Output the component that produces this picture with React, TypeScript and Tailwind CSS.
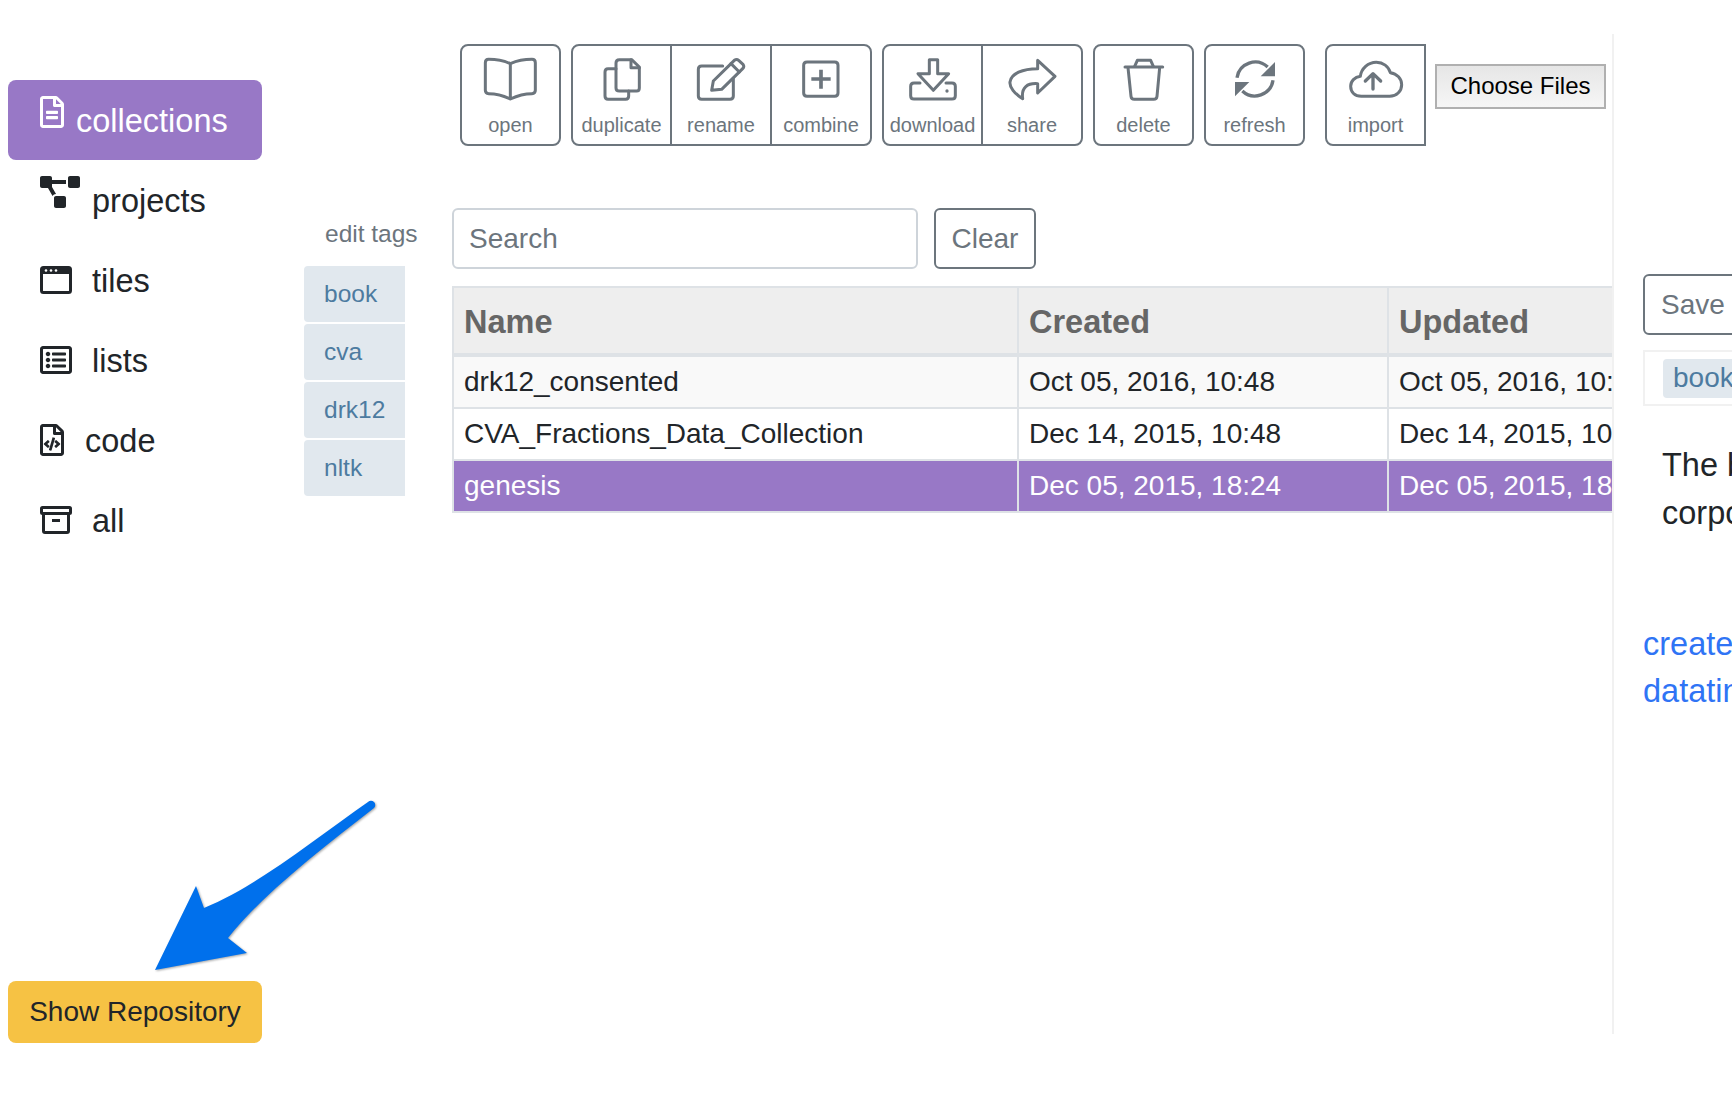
import React from 'react'
import { FaRegFileAlt, FaProjectDiagram, FaRegListAlt, FaRegFileCode } from 'react-icons/fa'

const TilesIcon = () => (
  <svg width="32" height="28" viewBox="0 0 32 28" fill="none">
    <rect x="1.5" y="1.5" width="29" height="25" rx="2" stroke="#212529" strokeWidth="3" />
    <rect x="1" y="1" width="30" height="7" fill="#212529" />
    <circle cx="6" cy="4.5" r="1.3" fill="#fff" />
    <circle cx="11" cy="4.5" r="1.3" fill="#fff" />
    <circle cx="16" cy="4.5" r="1.3" fill="#fff" />
  </svg>
)

const ArchiveIcon = () => (
  <svg width="32" height="28" viewBox="0 0 32 28" fill="none" stroke="#212529" strokeWidth="3">
    <rect x="1.5" y="1.5" width="29" height="6" rx="1" />
    <path d="M3.5 8V25Q3.5 26.5 5 26.5H27Q28.500 26.500 28.500 25V8" />
    <path d="M12 14.500H20" />
  </svg>
)

const navItems = [
  { label: 'projects', icon: <FaProjectDiagram className="w-[40px] h-[32px] text-[#212529]" />, textClass: 'ml-[12px] mt-[2px]', iconClass: 'mb-[16px]' },
  { label: 'tiles', icon: <TilesIcon />, textClass: 'ml-[20px] mt-[2px]', iconClass: '' },
  { label: 'lists', icon: <FaRegListAlt className="w-[32px] h-[32px] text-[#212529]" />, textClass: 'ml-[20px] mt-[2px]', iconClass: '' },
  { label: 'code', icon: <FaRegFileCode className="w-[24px] h-[32px] text-[#212529]" />, textClass: 'ml-[21px] mt-[2px]', iconClass: '' },
  { label: 'all', icon: <ArchiveIcon />, textClass: 'ml-[20px] mt-[2px]', iconClass: '' },
]

const ToolIcon = ({ x, w, children }: { x: number; w: number; children: React.ReactNode }) => (
  <svg
    width={w / 3}
    height={45}
    viewBox={`${x} 50 ${w} 135`}
    fill="none"
    stroke="#6c757d"
    strokeWidth="9"
    strokeLinejoin="round"
    strokeLinecap="round"
  >
    {children}
  </svg>
)

const ToolButton = ({ label, className, children }: { label: string; className: string; children: React.ReactNode }) => (
  <button className={`h-[102px] flex flex-col items-center pt-[11px] border-2 border-[#6c757d] bg-white text-[20px] leading-[24px] text-[#6c757d] ${className}`}>
    {children}
    <span className="mt-[11px]">{label}</span>
  </button>
)

const rows = [
  { name: 'drk12_consented', created: 'Oct 05, 2016, 10:48', updated: 'Oct 05, 2016, 10:48', cls: 'bg-[#f9f9f9] text-[#212529]' },
  { name: 'CVA_Fractions_Data_Collection', created: 'Dec 14, 2015, 10:48', updated: 'Dec 14, 2015, 10:48', cls: 'bg-white text-[#212529]' },
  { name: 'genesis', created: 'Dec 05, 2015, 18:24', updated: 'Dec 05, 2015, 18:24', cls: 'bg-[#9878c6] text-white' },
]

export default function App() {
  return (
    <div className="relative flex w-[1732px] h-[1104px] overflow-hidden bg-white font-['Liberation_Sans',Arial,sans-serif]">
      {/* sidebar */}
      <aside className="ml-[8px] w-[254px] shrink-0 pt-[80px] pb-[61px] flex flex-col justify-between">
        <nav className="flex flex-col">
          <a className="h-[80px] flex items-center pl-[32px] rounded-lg bg-[#9878c6] text-white text-[32.5px]">
            <FaRegFileAlt className="w-[24px] h-[32px] mb-[16px]" />
            <span className="ml-[12px] mt-[2px]">collections</span>
          </a>
          {navItems.map((item) => (
            <a key={item.label} className="h-[80px] flex items-center pl-[32px] text-[#212529] text-[32.5px]">
              <span className={`flex ${item.iconClass}`}>{item.icon}</span>
              <span className={item.textClass}>{item.label}</span>
            </a>
          ))}
        </nav>
        <button className="h-[62px] rounded-lg bg-[#f6c244] text-[#212529] text-[28px]">Show Repository</button>
      </aside>

      {/* tags */}
      <div className="ml-[42px] w-[148px] shrink-0 pt-[219px]">
        <div className="ml-[21px] h-[30px] leading-[30px] text-[24.5px] text-[#6c757d] whitespace-nowrap">edit tags</div>
        <div className="mt-[17px] w-[101px] flex flex-col gap-[2px]">
          {['book', 'cva', 'drk12', 'nltk'].map((tag) => (
            <div key={tag} className="h-[56px] pl-[20px] flex items-center rounded-l-sm bg-[#e1e8ee] text-[24.5px] text-[#4d7ba0]">
              {tag}
            </div>
          ))}
        </div>
      </div>

      {/* collections */}
      <main className="w-[1160px] shrink-0 pt-[44px]">
        <div className="ml-[8px] flex items-start">
          <ToolButton label="open" className="w-[101px] rounded-lg">
            <ToolIcon x={75} w={165}>
              <path d="M157 70C135 60 110 57 92 57Q82 57 82 67V150Q82 160 92 160C115 160 135 165 157 176C180 165 200 160 222 160Q232 160 232 150V67Q232 57 222 57C205 57 180 60 157 70ZM157 70V176" />
            </ToolIcon>
          </ToolButton>

          <div className="ml-[10px] flex">
            <ToolButton label="duplicate" className="w-[101px] rounded-l-lg">
              <ToolIcon x={426} w={120}>
                <path d="M478 58H515L538 80V143Q538 152 530 152H478Q468 152 468 143V68Q468 58 478 58Z" />
                <path d="M513 58V82H538" />
                <path d="M468 85H444Q435 85 435 95V167Q435 177 444 177H497Q506 177 506 167V152" />
              </ToolIcon>
            </ToolButton>
            <ToolButton label="rename" className="w-[102px] -ml-[2px]">
              <ToolIcon x={710} w={150}>
                <path d="M790 77H727Q717 77 717 87V167Q717 177 727 177H812Q822 177 822 167V115" />
                <path d="M757 150L762 122L825 60Q832 55 838 60L851 72Q856 79 850 85L787 147Z" />
                <path d="M815 70L840 95" />
              </ToolIcon>
            </ToolButton>
            <ToolButton label="combine" className="w-[102px] -ml-[2px] rounded-r-lg">
              <ToolIcon x={97} w={120}>
                <path d="M115 65H198Q208 65 208 75V158Q208 168 198 168H115Q105 168 105 158V75Q105 65 115 65Z" />
                <path d="M157 88V145M128 116H186" strokeWidth="11" strokeLinecap="butt" />
              </ToolIcon>
            </ToolButton>
          </div>

          <div className="ml-[10px] flex">
            <ToolButton label="download" className="w-[101px] rounded-l-lg">
              <ToolIcon x={416} w={150}>
                <path d="M480 58H505V100H538L492 150L446 100H480Z" />
                <path d="M452 128H434Q424 128 424 138V166Q424 176 434 176H548Q558 176 558 166V138Q558 128 548 128H530" />
                <circle cx="533" cy="152" r="5" fill="#6c757d" stroke="none" />
              </ToolIcon>
            </ToolButton>
            <ToolButton label="share" className="w-[102px] -ml-[2px] rounded-r-lg">
              <ToolIcon x={713} w={150}>
                <path d="M805 60L857 108L805 158V130C775 128 755 140 760 175C735 160 720 140 722 125C725 100 760 85 805 85Z" />
              </ToolIcon>
            </ToolButton>
          </div>

          <ToolButton label="delete" className="w-[101px] ml-[10px] rounded-lg">
            <ToolIcon x={100} w={132}>
              <path d="M109 80H222" />
              <path d="M138 78L146 60H186L194 78" />
              <path d="M118 82L127 168Q128 177 137 177H195Q204 177 205 168L213 82" />
            </ToolIcon>
          </ToolButton>

          <ToolButton label="refresh" className="w-[101px] ml-[10px] rounded-lg">
            <ToolIcon x={426} w={138}>
              <path d="M441 112A55 55 0 0 1 533 80" strokeLinecap="butt" strokeWidth="10" />
              <path d="M555 65V108H512Z" fill="#6c757d" stroke="none" />
              <path d="M549 120A55 55 0 0 1 457 152" strokeLinecap="butt" strokeWidth="10" />
              <path d="M435 168V125H478Z" fill="#6c757d" stroke="none" />
            </ToolIcon>
          </ToolButton>

          <ToolButton label="import" className="w-[101px] ml-[20px] rounded-l-lg">
            <ToolIcon x={775} w={168}>
              <path d="M815 168C795 168 783 155 783 138C783 122 795 110 812 108C815 85 835 66 860 66C880 66 897 78 902 97C922 100 936 115 936 133C936 153 920 168 900 168Z" />
              <path d="M850 146V106M827 122L850 100L873 122" strokeWidth="10" />
            </ToolIcon>
          </ToolButton>

          <button className="ml-[9px] mt-[20px] w-[171px] h-[45px] pb-[2px] border-2 border-[#b0b0b0] bg-gradient-to-b from-[#e6e6e6] to-[#f6f6f6] text-[24px] text-black">
            Choose Files
          </button>
        </div>

        <div className="mt-[62px] flex gap-[16px]">
          <div className="w-[466px] h-[61px] pl-[15px] flex items-center rounded-md border-2 border-[#ced4da] text-[28px] text-[#6c757d]">
            Search
          </div>
          <button className="w-[102px] h-[61px] rounded-md border-2 border-[#6c757d] text-[28px] text-[#6c757d]">Clear</button>
        </div>

        <div className="mt-[17px] overflow-hidden">
          <table className="w-[1300px] table-fixed border-separate border-spacing-0 border-t-[2px] border-l-[2px] border-[#dee2e6]">
            <thead>
              <tr className="bg-[#eeeeee] text-[#666666] text-[32.5px] text-left">
                <th className="w-[565px] h-[69px] pl-[10px] pt-[4px] font-bold border-b-[4px] border-r-[2px] border-[#dee2e6]">Name</th>
                <th className="w-[370px] pl-[10px] pt-[4px] font-bold border-b-[4px] border-r-[2px] border-[#dee2e6]">Created</th>
                <th className="pl-[10px] pt-[4px] font-bold border-b-[4px] border-[#dee2e6]">Updated</th>
              </tr>
            </thead>
            <tbody>
              {rows.map((row) => (
                <tr key={row.name} className={`text-[28px] ${row.cls}`}>
                  <td className="h-[52px] pl-[10px] whitespace-nowrap border-b-[2px] border-r-[2px] border-[#dee2e6]">{row.name}</td>
                  <td className="pl-[10px] whitespace-nowrap border-b-[2px] border-r-[2px] border-[#dee2e6]">{row.created}</td>
                  <td className="pl-[10px] whitespace-nowrap border-b-[2px] border-[#dee2e6]">{row.updated}</td>
                </tr>
              ))}
            </tbody>
          </table>
        </div>
      </main>

      {/* details panel */}
      <section className="mt-[34px] h-[1000px] flex-1 min-w-0 overflow-hidden border-l-2 border-[#f1f1f1] pl-[29px] pt-[240px] whitespace-nowrap">
        <button className="block w-[140px] h-[61px] pl-[16px] text-left rounded-md border-2 border-[#6c757d] text-[28px] text-[#6c757d]">Save</button>
        <div className="mt-[15px] h-[56px] w-[200px] pl-[18px] flex items-center border-2 border-[#f1f1f1]">
          <span className="h-[39px] pl-[10px] pr-[10px] flex items-center rounded-sm bg-[#e1e8ee] text-[28px] text-[#4d7ba0]">book</span>
        </div>
        <p className="mt-[35px] pl-[19px] text-[32.5px] leading-[48px] text-[#212529]">
          The book
          <br />
          corpora
        </p>
        <div className="mt-[84px] text-[32.5px] leading-[47px] text-[#2f74f5]">
          <div>created</div>
          <div>datatin</div>
        </div>
      </section>

      {/* annotation arrow */}
      <svg className="absolute left-[150px] top-[795px] drop-shadow-[1px_1px_1px_rgba(0,0,0,0.35)]" width="230" height="180" viewBox="150 795 230 180">
        <path d="M155 970L196 886L204 908C260 885 320 835 368 802A4 4 0 0 1 374 808C320 850 262 895 228 938L247 953Z" fill="#0070ec" />
      </svg>
    </div>
  )
}
